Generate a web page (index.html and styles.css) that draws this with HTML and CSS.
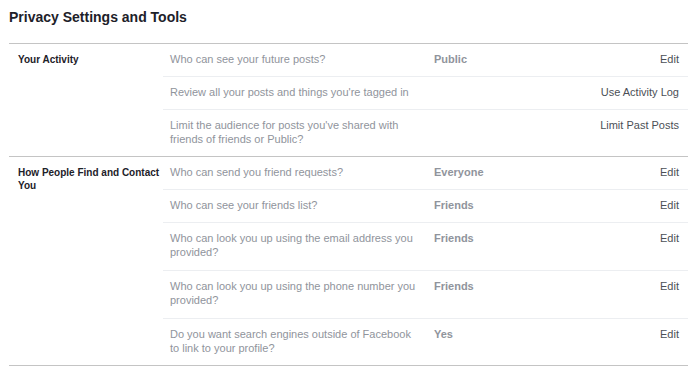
FILE: index.html
```html
<!DOCTYPE html>
<html lang="en">
<head>
  <meta charset="UTF-8">
  <title>Privacy Settings and Tools</title>
  <link rel="stylesheet" href="styles.css">
</head>
<body>
  <div class="container">
    <h2>Privacy Settings and Tools</h2>

    <div class="section">
      <div class="section-label">Your Activity</div>
      <div class="rows">
        <div class="row">
          <div class="question">Who can see your future posts?</div>
          <div class="value">Public</div>
          <a href="#" class="action">Edit</a>
        </div>
        <div class="row">
          <div class="question">Review all your posts and things you're tagged in</div>
          <div class="value"></div>
          <a href="#" class="action">Use Activity Log</a>
        </div>
        <div class="row">
          <div class="question">Limit the audience for posts you've shared with friends of friends or Public?</div>
          <div class="value"></div>
          <a href="#" class="action">Limit Past Posts</a>
        </div>
      </div>
    </div>

    <div class="section">
      <div class="section-label">How People Find and Contact You</div>
      <div class="rows">
        <div class="row">
          <div class="question">Who can send you friend requests?</div>
          <div class="value">Everyone</div>
          <a href="#" class="action">Edit</a>
        </div>
        <div class="row">
          <div class="question">Who can see your friends list?</div>
          <div class="value">Friends</div>
          <a href="#" class="action">Edit</a>
        </div>
        <div class="row tall">
          <div class="question">Who can look you up using the email address you provided?</div>
          <div class="value">Friends</div>
          <a href="#" class="action">Edit</a>
        </div>
        <div class="row tall">
          <div class="question">Who can look you up using the phone number you provided?</div>
          <div class="value">Friends</div>
          <a href="#" class="action">Edit</a>
        </div>
        <div class="row">
          <div class="question">Do you want search engines outside of Facebook to link to your profile?</div>
          <div class="value">Yes</div>
          <a href="#" class="action">Edit</a>
        </div>
      </div>
    </div>
  </div>
</body>
</html>
```

FILE: styles.css
```css
body {
  font-family: "Liberation Sans", Arial, sans-serif;
  margin: 0;
  padding: 0;
  color: #1d2129;
  background-color: #fff;
}
.container {
  width: 679px;
  margin: 0 0 0 9px;
  padding-top: 8px;
}
h2 {
  margin: 0 0 17px 0;
  font-size: 14px;
  line-height: 18px;
  font-weight: bold;
  color: #1d2129;
}
.section {
  display: flex;
  border-top: 1px solid #c4c4c4;
}
.section:last-child {
  border-bottom: 1px solid #c4c4c4;
}
.section-label {
  width: 145px;
  flex-shrink: 0;
  padding: 9px 0 0 9px;
  font-size: 10px;
  line-height: 13px;
  font-weight: bold;
}
.rows {
  flex: 1;
}
.row {
  display: grid;
  grid-template-columns: 264px 1fr auto;
  padding: 8px 9px 10px 7px;
  font-size: 11px;
  line-height: 14px;
  border-top: 1px solid #eceef1;
}
.row:first-child {
  border-top: none;
}
.row.tall {
  padding-bottom: 11px;
}
.question {
  color: #90949c;
  padding-right: 18px;
}
.value {
  color: #90949c;
  font-weight: bold;
}
.action {
  color: #4b4f56;
  text-decoration: none;
  text-align: right;
}
```
